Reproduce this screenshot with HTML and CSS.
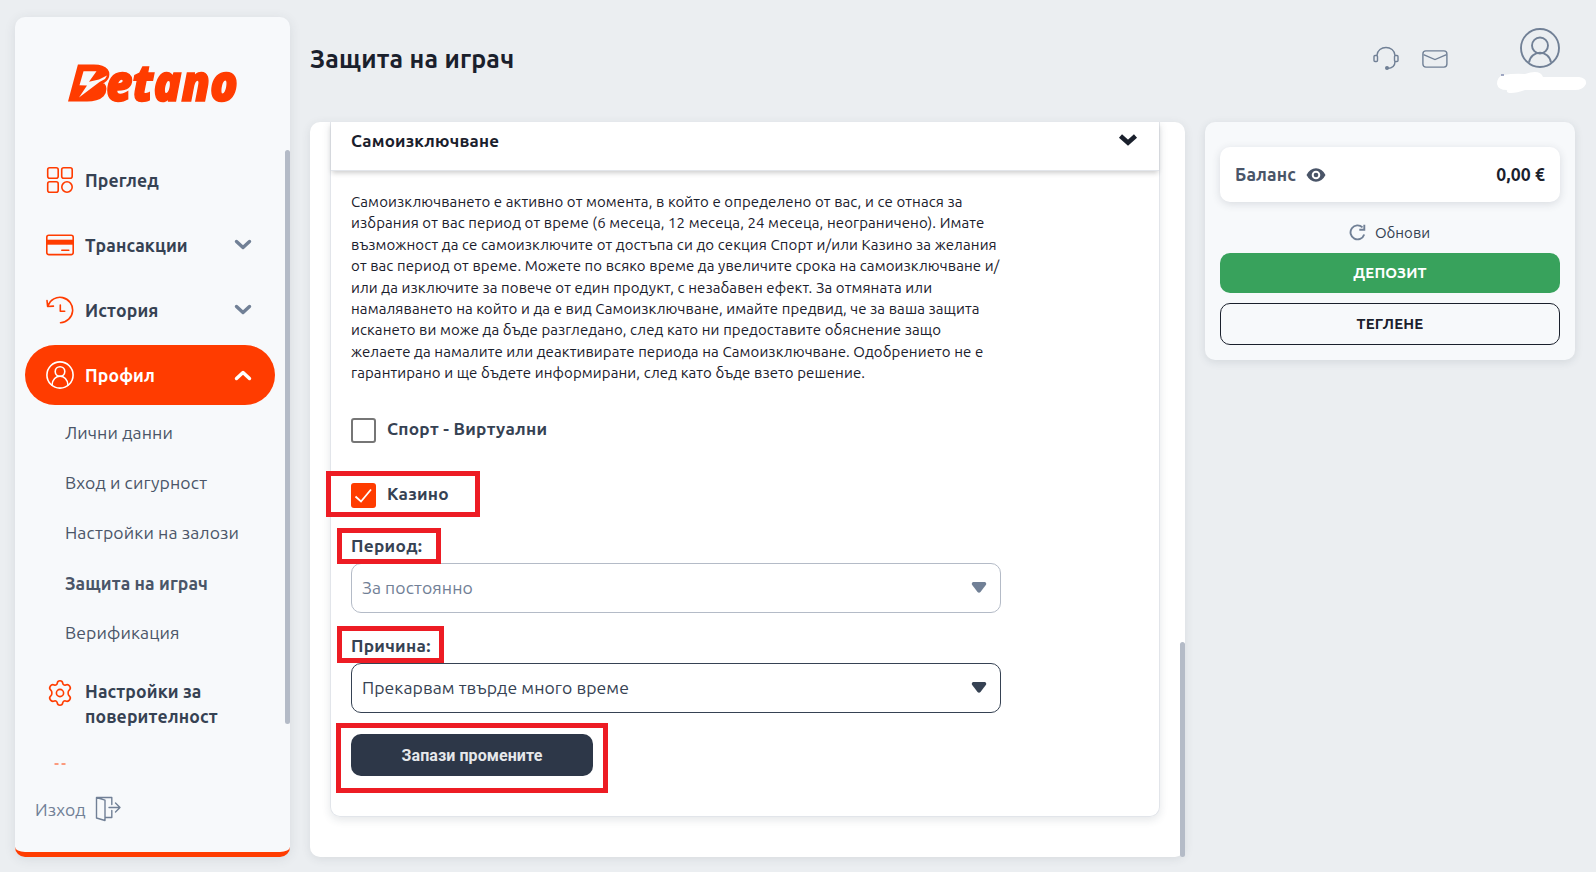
FILE: index.html
```html
<!DOCTYPE html>
<html lang="bg">
<head>
  <meta charset="UTF-8" />
  <meta name="viewport" content="width=device-width, initial-scale=1.0"/>
  <title>Защита на играч</title>
  <link rel="stylesheet" href="styles.css">
</head>
<body>

<div class="page">
  <aside class="sidebar">
    <svg class="logo" width="190" height="84" viewBox="0 0 190 84">
      <text class="logo-text" y="58"><tspan class="logo-b" x="6" y="55.5" textLength="36" lengthAdjust="spacingAndGlyphs">B</tspan><tspan x="41" y="57.5" textLength="132" lengthAdjust="spacingAndGlyphs">etano</tspan></text>
      <path class="logo-bolt" d="M18.500 28.300h13l-7.500 10.500 10-2.300 8-4-2 3.500-5.500 3L14 54.500l8-12-7.500-.3z"/>
    </svg>

    <nav class="nav">
      <a class="nav-item">
        <svg class="nav-icon" width="28" height="28" viewBox="0 0 28 28"><rect x="1.7" y="1.7" width="10.5" height="10.5" rx="2"/><rect x="15.7" y="1.7" width="10.5" height="10.5" rx="2"/><rect x="1.7" y="15.7" width="10.5" height="10.5" rx="2"/><circle cx="21" cy="21" r="5.2"/></svg>
        <span>Преглед</span>
      </a>
      <a class="nav-item">
        <svg class="nav-icon" width="28" height="28" viewBox="0 0 28 28"><rect x=".8" y="4.2" width="26.4" height="19.4" rx="2"/><path class="stripe" d="M1 8.700v5h26v-5z"/><path d="M15.800 19.200h7"/></svg>
        <span>Трансакции</span>
        <svg class="chevron" width="18" height="12" viewBox="0 0 18 12"><path d="M2.500 2.500l6.500 6 6.500-6"/></svg>
      </a>
      <a class="nav-item">
        <svg class="nav-icon" width="28" height="28" viewBox="0 0 28 28"><path d="M2 9.700A12.700 12.700 0 1 1 14.500 26.700M1 4.500l.6 6 5.800-.4M14.300 9v6.300h4.400"/></svg>
        <span>История</span>
        <svg class="chevron" width="18" height="12" viewBox="0 0 18 12"><path d="M2.500 2.500l6.500 6 6.500-6"/></svg>
      </a>
      <a class="nav-item active">
        <svg class="nav-icon" width="28" height="28" viewBox="0 0 28 28"><circle cx="14" cy="14" r="13.1"/><circle cx="14" cy="10.5" r="4.8"/><path d="M6 24.300c.5-12 15.500-12 16 0"/></svg>
        <span>Профил</span>
        <svg class="chevron" width="18" height="12" viewBox="0 0 18 12"><path d="M2.500 9.500L9 3.500l6.500 6"/></svg>
      </a>
      <div class="subnav">
        <a>Лични данни</a>
        <a>Вход и сигурност</a>
        <a>Настройки на залози</a>
        <a class="current">Защита на играч</a>
        <a>Верификация</a>
      </div>
      <a class="nav-item tall">
        <svg class="nav-icon" width="28" height="28" viewBox="0 0 28 28"><circle cx="14" cy="14" r="3.6"/><path d="M11.200 4.300c.5-3.400 5.100-3.400 5.600 0 .2 1.500 1.500 2.200 2.900 1.700 3.200-1.300 6.500 2.700 3.300 5.300-1.200 1-1.200 4.400 0 5.400 3.200 2.600-.1 6.600-3.300 5.300-1.400-.5-2.700.2-2.900 1.700-.5 3.400-5.100 3.400-5.600 0-.2-1.500-1.500-2.200-2.900-1.700C5.100 23.300 1.800 19.300 5 16.700c1.200-1 1.200-4.400 0-5.400C1.800 8.700 5.100 4.700 8.300 6c1.400.5 2.700-.2 2.900-1.700z"/></svg>
        <span>Настройки за<br>поверителност</span>
      </a>
      <svg class="cut-icon" width="14" height="2" viewBox="0 0 14 2"><path d="M.500 1h4M7.500 1h4"/></svg>
    </nav>

    <a class="logout">
      <span>Изход</span>
      <svg width="26" height="26" viewBox="0 0 26 26"><path d="M1.500 1.500l8.500 2.700v20.300L1.500 22zM1.500 1.500h15.300v7M10 21.500h6.800v-7M14 11.500h11M20.500 7l4.500 4.500-4.500 4.500"/></svg>
    </a>
    <i class="scrollbar side-scroll"></i>
  </aside>

  <div class="content">
    <header class="topbar">
      <h1>Защита на играч</h1>
      <div class="tools">
        <svg class="headset" width="26" height="26" viewBox="0 0 26 26"><path d="M3.900 9.500C4.500-1.200 21.500-1.200 22 9.500M22 15.500c0 5-2.500 6.700-7.500 7"/><rect x="1" y="9.5" width="3.5" height="6" rx="1"/><rect x="21.5" y="9.5" width="3.5" height="6" rx="1"/><circle cx="14" cy="22" r="1.3" fill="#718096"/></svg>
        <svg class="mail" width="26" height="20" viewBox="0 0 26 20"><rect x=".9" y="1.9" width="24" height="16.2" rx="3"/><path d="M1.500 5.700L13 10.600l11.500-4.900"/></svg>
        <div class="user">
          <svg class="avatar" width="40" height="40" viewBox="0 0 40 40"><circle cx="20" cy="20" r="19"/><circle cx="20" cy="17.5" r="8"/><path d="M9 34.500c2-13 20-13 22 0"/></svg>
          <svg class="smear" width="90" height="22" viewBox="0 0 90 22"><path d="M6 3Q18 1 28 2Q43-3 46 5H82Q90 6 89 12Q86 18 78 18H28Q20 21 14 21Q9 21 10 18Q1 18 0 12Q0 5 6 3z"/><path d="M4 3h3" stroke="#7c86ac"/></svg>
        </div>
      </div>
    </header>

    <div class="columns">
      <main class="panel">
        <section class="card">
          <div class="card-head">
            <h2>Самоизключване</h2>
            <svg width="20" height="14" viewBox="0 0 20 14"><path d="M2.500 3L10 9.700 17.500 3"/></svg>
          </div>
          <div class="card-body">
            <p class="info">
              <span>Самоизключването е активно от момента, в който е определено от вас, и се отнася за</span>
              <span>избрания от вас период от време (6 месеца, 12 месеца, 24 месеца, неограничено). Имате</span>
              <span>възможност да се самоизключите от достъпа си до секция Спорт и/или Казино за желания</span>
              <span>от вас период от време. Можете по всяко време да увеличите срока на самоизключване и/</span>
              <span>или да изключите за повече от един продукт, с незабавен ефект. За отмяната или</span>
              <span>намаляването на който и да е вид Самоизключване, имайте предвид, че за ваша защита</span>
              <span>искането ви може да бъде разгледано, след като ни предоставите обяснение защо</span>
              <span>желаете да намалите или деактивирате периода на Самоизключване. Одобрението не е</span>
              <span>гарантирано и ще бъдете информирани, след като бъде взето решение.</span>
            </p>
            <label class="check">
              <span class="box"></span>
              <span class="check-text">Спорт - Виртуални</span>
            </label>
            <label class="check">
              <span class="box checked"><svg width="19" height="16" viewBox="0 0 19 16"><path d="M1.500 8.500l5.500 5L17 1.500"/></svg></span>
              <span class="check-text">Казино</span>
              <i class="mark mark-casino"></i>
            </label>
            <div class="field">
              <div class="label">Период:<i class="mark mark-period"></i></div>
              <div class="select muted"><span>За постоянно</span><svg width="16" height="12" viewBox="0 0 16 12"><path d="M2 1h12q2 1 .8 3L9.500 11q-1.500 1.500-3 0L1.200 4Q0 2 2 1z"/></svg></div>
            </div>
            <div class="field">
              <div class="label">Причина:<i class="mark mark-reason"></i></div>
              <div class="select"><span>Прекарвам твърде много време</span><svg width="16" height="12" viewBox="0 0 16 12"><path d="M2 1h12q2 1 .8 3L9.500 11q-1.500 1.500-3 0L1.200 4Q0 2 2 1z"/></svg></div>
            </div>
            <div class="actions">
              <button class="save">Запази промените</button>
              <i class="mark mark-save"></i>
            </div>
          </div>
        </section>
        <i class="scrollbar main-scroll"></i>
      </main>

      <aside class="wallet">
        <div class="balance">
          <span class="balance-label">Баланс</span>
          <svg width="20" height="14" viewBox="0 0 20 14"><path fill-rule="evenodd" d="M.5 7Q4 .3 10 .3T19.500 7Q16 13.700 10 13.700T.5 7zM10 2.700a4.300 4.300 0 1 0 0 8.600 4.300 4.300 0 0 0 0-8.600z"/><circle cx="10" cy="7" r="2.3"/></svg>
          <span class="amount">0,00 €</span>
        </div>
        <div class="refresh">
          <svg width="17" height="17" viewBox="0 0 17 17"><path d="M15.200 10.500A7 7 0 1 1 13.500 3.400M15.300.8v5h-5"/></svg>
          <span>Обнови</span>
        </div>
        <button class="deposit">ДЕПОЗИТ</button>
        <button class="withdraw">ТЕГЛЕНЕ</button>
      </aside>
    </div>
  </div>
</div>

</body>
</html>
```
FILE: styles.css
```css
* { box-sizing: border-box; }
body { margin: 0; background: #ebeef1; color: #1a202c; font-family: Ubuntu, "Noto Sans", sans-serif; overflow: hidden; }
h1, h2, p { margin: 0; }
svg { display: block; flex: none; fill: none; }
button { font-family: inherit; display: block; width: 100%; cursor: pointer; }
span { white-space: nowrap; }

.page { display: flex; gap: 20px; height: 872px; padding: 17px 21px 15px 15px; }

/* sidebar */
.sidebar { position: relative; width: 275px; display: flex; flex-direction: column; background: #f7f9fb; border-radius: 10px; border-bottom: 5px solid #ff3c00; box-shadow: 0 2px 12px rgba(45, 55, 72, .1); }
.logo { margin: 26px 0 23px 50px; }
.logo-text { font-family: "Open Sans", sans-serif; font-weight: 800; font-style: italic; font-size: 51px; fill: #ff3c00; stroke: #ff3c00; stroke-width: 1.5; }
.logo-b { font-size: 45px; stroke-width: 5; }
.logo-bolt { fill: #f7f9fb; }
.nav { height: 616px; overflow: hidden; padding: 0 15px 0 10px; }
.nav-item { display: flex; align-items: center; height: 60px; margin-bottom: 5px; padding: 0 23px 0 21px; gap: 11px; border-radius: 30px; color: #364253; font-weight: 700; font-size: 17.6px; letter-spacing: .12px; line-height: 25px; }
.nav-item span { padding-top: 1px; }
.nav-icon { stroke: #ff3c00; stroke-width: 1.6; stroke-linecap: round; stroke-linejoin: round; }
.nav-icon .stripe { fill: #ff3c00; stroke: none; }
.chevron { margin-left: auto; stroke: #718096; stroke-width: 3.4; stroke-linecap: round; stroke-linejoin: round; }
.active { background: #ff3c00; color: #fff; margin-bottom: 3px; }
.active .nav-icon, .active .chevron { stroke: #fff; }
.subnav a { display: block; width: max-content; height: 50px; padding-left: 40px; line-height: 50px; font-size: 17.6px; letter-spacing: .1px; color: #4a5568; }
.subnav .current { font-weight: 700; line-height: 51px; }
.tall { height: 90px; margin-bottom: 0; }
.tall .nav-icon { margin-bottom: 20px; }
.cut-icon { margin: 15px 0 0 29px; stroke: #ff3c00; }
.logout { display: flex; align-items: center; gap: 9px; margin: 30px 0 0 20px; color: #718096; font-size: 17.6px; letter-spacing: .1px; line-height: 25px; }
.logout svg { stroke: #718096; stroke-width: 1.4; stroke-linejoin: round; stroke-linecap: round; }
.scrollbar { position: absolute; right: 0; width: 5px; border-radius: 3px; background: #b4bbc7; }
.side-scroll { top: 133px; height: 574px; }

/* top bar */
.content { flex: 1; }
.topbar { display: flex; justify-content: space-between; height: 105px; }
h1 { margin-top: 27px; font-size: 25px; letter-spacing: .22px; line-height: 30px; }
.tools { display: flex; }
.tools svg { stroke: #718096; stroke-width: 1.4; }
.headset { margin: 29px 23px 0 0; }
.mail { margin: 32px 49px 0 0; }
.user { width: 78px; }
.user .avatar { margin: 11px 0 4px 23px; stroke-width: 1.9; }
.user .smear { fill: #fff; stroke: none; }

/* main panel */
.columns { display: flex; align-items: flex-start; gap: 20px; }
.panel { position: relative; width: 875px; height: 735px; background: #fff; border-radius: 10px; box-shadow: 0 2px 10px rgba(45, 55, 72, .1); }
.card { width: 830px; height: 695px; margin-left: 20px; border: 1px solid #e2e5ea; border-top: 0; border-radius: 0 0 10px 10px; box-shadow: 0 3px 8px rgba(45, 55, 72, .12); clip-path: inset(0 -12px -14px -12px); }
.card-head { display: flex; justify-content: space-between; align-items: flex-start; height: 49px; padding: 6px 21px 0 20px; border-bottom: 1px solid #e2e5ea; box-shadow: 0 3px 5px -1px rgba(0, 0, 0, .2); }
.card-head h2 { font-size: 17px; letter-spacing: .2px; line-height: 25px; }
.card-head svg { margin-top: 5px; stroke: #1a202c; stroke-width: 4.6; }
.card-body { padding: 20px; }
.info { height: 193px; margin-bottom: 34px; }
.info span { display: block; width: max-content; font-size: 15px; letter-spacing: .1px; line-height: 21.4px; }
.check { position: relative; display: flex; align-items: center; gap: 11px; width: max-content; height: 25px; margin-bottom: 40px; font-size: 17.3px; letter-spacing: .25px; font-weight: 700; color: #364253; }
.check-text { padding-bottom: 5px; }
.box { display: flex; align-items: center; justify-content: center; width: 25px; height: 25px; border: 2px solid #767676; border-radius: 3px; }
.checked { border: 0; background: #ff3c00; }
.checked svg { stroke: #fff; stroke-width: 1.8; }
.check + .field { margin-top: -20px; }
.field { margin-bottom: 15px; }
.label { position: relative; width: max-content; height: 35px; line-height: 35px; font-size: 17.3px; letter-spacing: .28px; font-weight: 700; color: #364253; }
.select { display: flex; align-items: center; justify-content: space-between; width: 650px; height: 50px; padding: 0 13px 2px 10px; border: 1px solid #364253; border-radius: 10px; color: #364253; font-size: 17.6px; letter-spacing: .06px; }
.select svg { fill: #364253; }
.muted { border-color: #b4bbc7; color: #718096; }
.muted svg { fill: #718096; }
.actions { position: relative; padding-top: 6px; }
.save { width: 242px; height: 42px; border: 0; border-radius: 10px; background: #2d3748; color: #e6e8eb; font: 700 16px Roboto, sans-serif; letter-spacing: .08px; }

/* red highlights */
.mark { position: absolute; border: 5px solid #ed1c24; }
.mark-casino { left: -25px; top: -12px; width: 154px; height: 46px; }
.mark-period { left: -14px; top: 0; width: 104px; height: 36px; }
.mark-reason { left: -14px; top: -2px; width: 107px; height: 37px; }
.mark-save { left: -15px; top: -5px; width: 272px; height: 70px; }
.main-scroll { bottom: 0; height: 215px; }

/* wallet */
.wallet { width: 370px; height: 238px; padding: 25px 15px 15px; background: #f7f9fb; border-radius: 10px; box-shadow: 0 2px 8px rgba(45, 55, 72, .12); }
.balance { display: flex; align-items: center; height: 55px; padding: 0 15px; background: #fff; border-radius: 10px; box-shadow: 0 2px 8px rgba(45, 55, 72, .15); font-size: 17.6px; letter-spacing: .1px; font-weight: 700; }
.balance-label { color: #4a5568; }
.balance svg { margin-left: 10px; fill: #4a5568; }
.amount { margin-left: auto; }
.refresh { display: flex; align-items: center; justify-content: center; gap: 9px; height: 51px; padding: 9px 1px 0 0; font-size: 15px; color: #364253; }
.refresh svg { stroke: #718096; stroke-width: 1.9; }
.deposit, .withdraw { padding: 0 0 2px; border-radius: 10px; font-size: 15px; letter-spacing: .15px; font-weight: 700; }
.deposit { height: 40px; border: 0; margin-bottom: 10px; background: #38a25c; color: #fff; }
.withdraw { height: 42px; border: 1px solid #1a202c; background: transparent; color: #1a202c; }
```
